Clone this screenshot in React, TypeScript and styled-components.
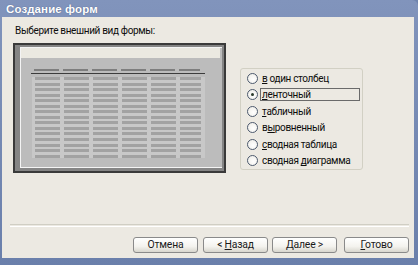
import React from "react";
import styled, { createGlobalStyle } from "styled-components";

const Global = createGlobalStyle`
  html, body { margin: 0; padding: 0; background: #6f84ae; }
  body { width: 418px; height: 265px; overflow: hidden; }
`;

const Window = styled.div`
  width: 418px;
  height: 265px;
  box-sizing: border-box;
  display: flex;
  flex-direction: column;
  background: linear-gradient(180deg, #8194bc 0%, #6a7fab 100%);
  padding: 0 4px 7px 2px;
  border-top-right-radius: 6px;
  font-family: Roboto, "Liberation Sans", Arial, sans-serif;
`;

const TitleBar = styled.div`
  height: 17px;
  flex: none;
  display: flex;
  align-items: center;
  padding-left: 4px;
  color: #ffffff;
  font-family: "Liberation Sans", Arial, sans-serif;
  font-weight: bold;
  font-size: 11.5px;
  letter-spacing: 0.1px;
  text-shadow: 0 0 1px #40507a;
`;

const Body = styled.div`
  flex: 1;
  background: #ece9e2;
  display: flex;
  flex-direction: column;
  padding: 7px 5px 5px 11px;
  font-size: 10px;
  letter-spacing: -0.35px;
  color: #0d0d0d;
`;

const Label = styled.div`
  height: 13px;
  line-height: 13px;
  padding-left: 2px;
`;

const ContentRow = styled.div`
  display: flex;
  align-items: flex-start;
  margin-top: 6px;
`;

const Frame = styled.div`
  width: 213px;
  height: 130px;
  box-sizing: border-box;
  border: 2px solid #3a3a3a;
  background: #858585;
  padding: 2px 2px 3px 5px;
  display: flex;
`;

const Screen = styled.div`
  flex: 1;
  display: flex;
  flex-direction: column;
  border-left: 1px solid #f4f4f4;
  border-top: 1px solid #f4f4f4;
  border-bottom: 1px solid #f4f4f4;
  background: #bcbcbc;
`;

const HeaderStrip = styled.div`
  height: 10px;
  background: #ebe9e1;
  margin-right: 2px;
`;

const GridArea = styled.div`
  flex: 1;
  padding: 11px 17px 0 10px;
  display: flex;
  flex-direction: column;
`;

const Columns = styled.div`
  display: grid;
  grid-template-columns: 25px 25px 25px 25px 25px 21px;
  column-gap: 4px;
  padding-left: 3px;
`;

const HeadBar = styled.div`
  height: 2px;
  background: #7e7e7e;
`;

const Underline = styled.div`
  height: 1px;
  background: #3c3c3c;
  margin: 2px 0 3px;
`;

const RowsBox = styled.div`
  display: grid;
  grid-template-columns: 25px 25px 25px 25px 25px 21px;
  column-gap: 4px;
  row-gap: 2.55px;
  padding: 0 0 0 3px;
  background: #c8c8c8;
  margin-left: 1px;
`;

const Cell = styled.div`
  height: 3px;
  background: #a2a2a2;
`;

const Group = styled.div`
  margin: 25px 0 0 14px;
  width: 123px;
  height: 102px;
  box-sizing: border-box;
  border: 1px solid #d2d0c4;
  border-radius: 3px;
  padding: 1px 0 0 6px;
  display: flex;
  flex-direction: column;
`;

const Option = styled.div`
  height: 16.6px;
  display: flex;
  align-items: center;
`;

const Circle = styled.span<{ $checked?: boolean }>`
  width: 11px;
  height: 11px;
  box-sizing: border-box;
  border-radius: 50%;
  border: 1px solid #4d5a6e;
  background: radial-gradient(circle at 60% 60%, #ffffff 0%, #eceae4 100%);
  display: flex;
  align-items: center;
  justify-content: center;
  flex: none;
  &::after {
    content: "";
    display: ${(p) => (p.$checked ? "block" : "none")};
    width: 3px;
    height: 3px;
    border-radius: 50%;
    background: #2b3a2b;
  }
`;

const OptionText = styled.span<{ $focused?: boolean }>`
  margin-left: 2px;
  padding: 0 1px;
  line-height: 11px;
  border: 1px solid ${(p) => (p.$focused ? "#6a6a6a" : "transparent")};
  width: ${(p) => (p.$focused ? "96px" : "auto")};
  white-space: nowrap;
  & u { text-decoration: underline; text-underline-offset: 1px; }
`;

const Spacer = styled.div`
  flex: 1;
`;

const Separator = styled.div`
  height: 1px;
  border-top: 1px solid #d0cec4;
  border-bottom: 1px solid #ffffff;
  margin: 0 0 0 -3px;
`;

const ButtonRow = styled.div`
  display: flex;
  justify-content: flex-end;
  gap: 5px;
  margin-top: 10px;
`;

const Button = styled.button<{ $extra?: number }>`
  width: 65px;
  height: 16px;
  padding: 0;
  margin-left: ${(p) => p.$extra ?? 0}px;
  box-sizing: border-box;
  border: 1px solid #8a8a8a;
  border-radius: 3px;
  background: linear-gradient(180deg, #ffffff 0%, #f4f3ee 60%, #d8d6ce 100%);
  font-family: Roboto, "Liberation Sans", Arial, sans-serif;
  font-size: 10.4px;
  letter-spacing: -0.2px;
  color: #1a1a1a;
  line-height: 14px;
  & u { text-decoration: underline; text-underline-offset: 1px; }
`;

const options: { pre: string; key: string; post: string }[] = [
  { pre: "", key: "в", post: " один столбец" },
  { pre: "", key: "л", post: "енточный" },
  { pre: "", key: "т", post: "абличный" },
  { pre: "в", key: "ы", post: "ровненный" },
  { pre: "", key: "с", post: "водная таблица" },
  { pre: "сводная ", key: "д", post: "иаграмма" },
];

export default function App() {
  const rows = Array.from({ length: 15 });
  const cols = Array.from({ length: 6 });
  return (
    <>
      <Global />
      <Window>
        <TitleBar>Создание форм</TitleBar>
        <Body>
          <Label>Выберите внешний вид формы:</Label>
          <ContentRow>
            <Frame>
              <Screen>
                <HeaderStrip />
                <GridArea>
                  <Columns>
                    {cols.map((_, i) => (
                      <HeadBar key={i} />
                    ))}
                  </Columns>
                  <Underline />
                  <RowsBox>
                    {rows.flatMap((_, r) =>
                      cols.map((_, c) => <Cell key={`${r}-${c}`} />)
                    )}
                  </RowsBox>
                </GridArea>
              </Screen>
            </Frame>
            <Group>
              {options.map((o, i) => (
                <Option key={i}>
                  <Circle $checked={i === 1} />
                  <OptionText $focused={i === 1}>
                    {o.pre}
                    <u>{o.key}</u>
                    {o.post}
                  </OptionText>
                </Option>
              ))}
            </Group>
          </ContentRow>
          <Spacer />
          <Separator />
          <ButtonRow>
            <Button>Отмена</Button>
            <Button>
              &lt; <u>Н</u>азад
            </Button>
            <Button $extra={-1}>
              <u>Д</u>алее &gt;
            </Button>
            <Button $extra={2}>
              <u>Г</u>отово
            </Button>
          </ButtonRow>
        </Body>
      </Window>
    </>
  );
}
